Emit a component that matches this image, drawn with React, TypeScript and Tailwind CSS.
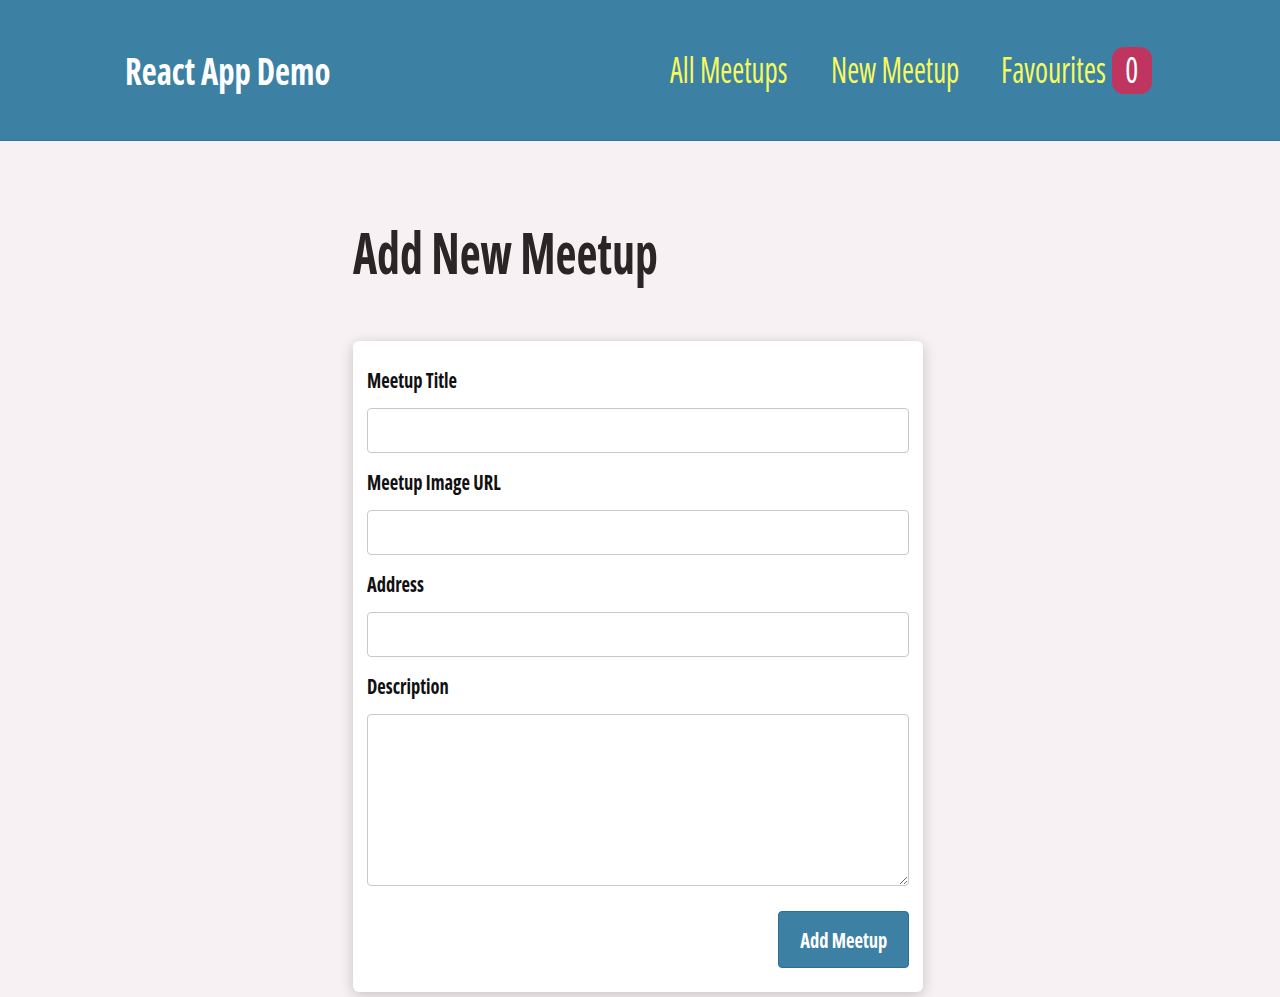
import React from 'react';

// Form field rows share the same look
const fields = [
  { id: 'title', label: 'Meetup Title' },
  { id: 'image', label: 'Meetup Image URL' },
  { id: 'address', label: 'Address' },
];

const labelClass =
  'block origin-left scale-x-[0.84] whitespace-nowrap text-[22px] font-bold leading-[30px] text-[#111] mb-[12px] mt-[-2px] pb-[2px]';

function Field({ id, label }: { id: string; label: string }) {
  return (
    <div className="flex flex-col">
      <label htmlFor={id} className={labelClass}>
        {label}
      </label>
      <input
        id={id}
        type="text"
        className="h-[45px] w-full rounded-[4px] border border-[#c9c9c9] bg-white px-2 outline-none"
      />
    </div>
  );
}

export default function App() {
  return (
    <div
      className="min-h-[997px] bg-[#f8f1f3] [font-stretch:75%]"
      style={{ fontFamily: '"Open Sans", "Noto Sans", sans-serif' }}
    >
      {/* Header */}
      <header className="h-[141px] bg-[#3c80a4] border-b border-[#33759a] flex items-center justify-between pl-[125px] pr-[128px]">
        <div className="origin-left scale-x-[0.86] whitespace-nowrap text-[38px] font-bold text-white">
          React App Demo
        </div>
        <nav>
          <ul className="flex items-center text-[36px] text-[#f6fa5c]">
            <li className="w-[118px] whitespace-nowrap">
              <span className="inline-block origin-left scale-x-[0.8]">All Meetups</span>
            </li>
            <li className="ml-[43px] w-[127px] whitespace-nowrap">
              <span className="inline-block origin-left scale-x-[0.8]">New Meetup</span>
            </li>
            <li className="ml-[43px] flex items-center gap-[7px]">
              <span className="w-[104px] whitespace-nowrap">
                <span className="inline-block origin-left scale-x-[0.82]">Favourites</span>
              </span>
              <span className="flex h-[47px] w-[40px] items-center justify-center rounded-[12px] bg-[#bf3560] text-white">
                <span className="inline-block scale-x-[0.85]">0</span>
              </span>
            </li>
          </ul>
        </nav>
      </header>

      {/* Main */}
      <main className="mx-auto w-[574px] pr-[4px] pt-[73px]">
        <h1 className="origin-left scale-x-[0.79] whitespace-nowrap text-[58px] font-bold text-[#2a2626] leading-[76px]">
          Add New Meetup
        </h1>

        <div className="mt-[51px] rounded-[6px] bg-white px-[14px] pt-[25px] pb-[24px] shadow-[0_3px_14px_rgba(0,0,0,0.2)]">
          <form className="flex flex-col gap-[15px]">
            {fields.map((f) => (
              <Field key={f.id} id={f.id} label={f.label} />
            ))}
            <div className="flex flex-col">
              <label htmlFor="description" className={labelClass}>
                Description
              </label>
              <textarea
                id="description"
                rows={5}
                className="h-[172px] w-full rounded-[4px] border border-[#c9c9c9] bg-white px-2"
              />
            </div>
            <div className="flex justify-end mt-[10px]">
              <button
                type="button"
                className="h-[57px] w-[131px] rounded-[4px] border border-[#2d6f93] bg-[#3c80a4] text-[22px] font-bold text-white"
              >
                <span className="inline-block scale-x-[0.84] whitespace-nowrap">Add Meetup</span>
              </button>
            </div>
          </form>
        </div>
      </main>
    </div>
  );
}
